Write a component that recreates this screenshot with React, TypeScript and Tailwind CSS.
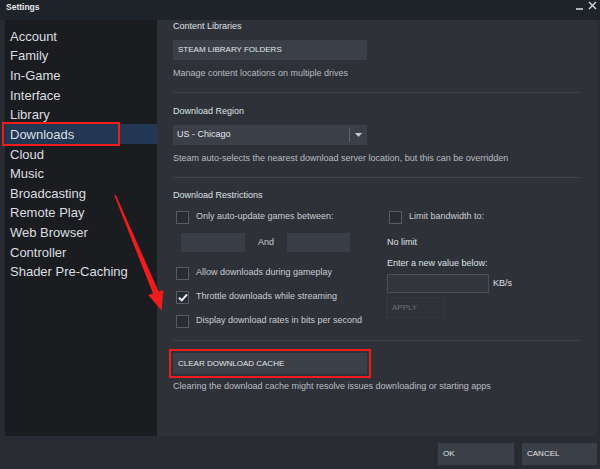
import React from 'react'

const NAV_ITEMS = [
  'Account',
  'Family',
  'In-Game',
  'Interface',
  'Library',
  'Downloads',
  'Cloud',
  'Music',
  'Broadcasting',
  'Remote Play',
  'Web Browser',
  'Controller',
  'Shader Pre-Caching',
]

function Checkbox({ checked = false }: { checked?: boolean }) {
  return (
    <div className="w-[13px] h-[13px] border border-[#585c63] bg-[#292c32] flex items-center justify-center shrink-0">
      {checked && (
        <svg width="10" height="9" viewBox="0 0 10 9">
          <path d="M1 4.8 L3.8 7.4 L9 1.4" stroke="#eef0f1" strokeWidth="2" fill="none" />
        </svg>
      )}
    </div>
  )
}

function CheckRow({ label, checked = false }: { label: string; checked?: boolean }) {
  return (
    <div className="flex items-center h-[14px]">
      <div className="ml-[3px]">
        <Checkbox checked={checked} />
      </div>
      <span className="ml-[7px] text-[9px] text-[#c9cdd1] whitespace-nowrap">{label}</span>
    </div>
  )
}

function Divider({ className = '' }: { className?: string }) {
  return <div className={'h-[1px] bg-[#3d4047] ' + className} />
}

export default function App() {
  return (
    <div
      className="relative w-[600px] h-[469px] flex flex-col bg-[#282b31] overflow-hidden"
      style={{ fontFamily: '"Liberation Sans", Arial, sans-serif' }}
    >
      {/* Title bar */}
      <div className="h-[20px] flex items-start justify-between bg-[#1e2229] shrink-0">
        <span className="pl-[6px] pt-[2px] text-[8.5px] leading-[10px] font-bold text-[#e4e6e8]">Settings</span>
        <div className="flex items-start gap-[5px] pr-[3px] pt-[1px]">
          <div className="w-[7px] h-[2px] bg-[#aeb2b6] mt-[7px]" />
          <svg width="9" height="9" viewBox="0 0 9 9">
            <path d="M1 1 L8 8 M8 1 L1 8" stroke="#d8dadc" strokeWidth="1.4" />
          </svg>
        </div>
      </div>

      {/* Body */}
      <div className="flex h-[416px] pl-[5px] pr-[3px]">
        {/* Sidebar */}
        <div className="w-[152px] bg-[#1a1c20] pt-[6px]">
          {NAV_ITEMS.map((item) => (
            <div
              key={item}
              className={
                'h-[19.67px] flex items-center pl-[5px] pt-[1px] text-[13px] text-[#dcdfe1] ' +
                (item === 'Downloads' ? 'bg-[#213753]' : '')
              }
            >
              {item}
            </div>
          ))}
        </div>

        {/* Content */}
        <div className="flex-1 bg-[#2e3138] pl-[16px] pr-[17px] flex flex-col">
          <div className="h-[13px] leading-[13px] text-[9px] text-[#dfe1e3]">Content Libraries</div>
          <div className="mt-[7px] w-[194px] h-[20px] bg-[#3b3f48] flex items-center pl-[5px] text-[8px] text-[#e4e6e8]">
            STEAM LIBRARY FOLDERS
          </div>
          <div className="mt-[6px] h-[14px] leading-[14px] text-[9px] text-[#b9bdc1]">
            Manage content locations on multiple drives
          </div>
          <Divider className="mt-[12px]" />

          <div className="mt-[11px] h-[14px] leading-[14px] text-[9px] text-[#dfe1e3]">Download Region</div>
          <div className="mt-[7px] w-[194px] h-[20px] bg-[#3b3f48] flex items-center">
            <span className="pl-[4px] flex-1 text-[9px] text-[#e4e6e8]">US - Chicago</span>
            <div className="w-[1px] h-[14px] bg-[#5d626a]" />
            <svg className="mx-[5px]" width="7" height="4" viewBox="0 0 7 4">
              <path d="M0 0 L7 0 L3.5 4 Z" fill="#c4c8cc" />
            </svg>
          </div>
          <div className="mt-[6px] h-[14px] leading-[14px] text-[9px] text-[#b9bdc1] whitespace-nowrap">
            Steam auto-selects the nearest download server location, but this can be overridden
          </div>
          <Divider className="mt-[12px]" />

          <div className="mt-[10px] h-[14px] leading-[14px] text-[9px] text-[#dfe1e3]">Download Restrictions</div>

          <div className="flex">
            {/* Left column */}
            <div className="w-[213px] flex flex-col">
              <div className="mt-[8px]">
                <CheckRow label="Only auto-update games between:" />
              </div>
              <div className="mt-[9px] flex items-center h-[19px]">
                <div className="ml-[8px] w-[64px] h-[19px] bg-[#3a3e46]" />
                <span className="flex-1 text-center text-[9px] text-[#c9cdd1]">And</span>
                <div className="w-[63px] h-[19px] bg-[#3a3e46] mr-[36px]" />
              </div>
              <div className="mt-[14px]">
                <CheckRow label="Allow downloads during gameplay" />
              </div>
              <div className="mt-[10px]">
                <CheckRow label="Throttle downloads while streaming" checked />
              </div>
              <div className="mt-[10px]">
                <CheckRow label="Display download rates in bits per second" />
              </div>
            </div>

            {/* Right column */}
            <div className="flex flex-col">
              <div className="mt-[8px]">
                <CheckRow label="Limit bandwidth to:" />
              </div>
              <div className="mt-[11px] ml-[1px] h-[14px] leading-[14px] text-[9px] text-[#dfe1e3]">No limit</div>
              <div className="mt-[7px] ml-[1px] h-[14px] leading-[14px] text-[9px] text-[#dfe1e3]">
                Enter a new value below:
              </div>
              <div className="mt-[4px] ml-[1px] flex items-center">
                <div className="w-[102px] h-[19px] bg-[#33363d] border border-[#4b4f57]" />
                <span className="ml-[4px] text-[9px] text-[#dfe1e3]">KB/s</span>
              </div>
              <div className="mt-[4px] w-[59px] h-[21px] bg-[#2f3238] border border-[#35383e] flex items-center pl-[5px] text-[8px] text-[#6c7178]">
                APPLY
              </div>
            </div>
          </div>

          <Divider className="mt-[12px]" />

          <div className="relative mt-[12px] w-[194px] h-[21px] bg-[#3b3f48] flex items-center pl-[5px] text-[8px] text-[#e4e6e8]">
            CLEAR DOWNLOAD CACHE
            <div className="absolute -left-[4px] -right-[4px] -top-[4px] -bottom-[4px] border-2 border-[#f01c1c]" />
          </div>
          <div className="mt-[5px] h-[14px] leading-[14px] text-[9px] text-[#b9bdc1] whitespace-nowrap">
            Clearing the download cache might resolve issues downloading or starting apps
          </div>
        </div>
      </div>

      {/* Footer */}
      <div className="flex-1 flex justify-end items-start gap-[8px] pt-[7px] pr-[3px]">
        <div className="w-[76px] h-[22px] bg-[#3b3f48] flex items-center pl-[5px] text-[8px] text-[#e4e6e8]">OK</div>
        <div className="w-[75px] h-[22px] bg-[#3b3f48] flex items-center pl-[5px] text-[8px] text-[#e4e6e8]">CANCEL</div>
      </div>

      {/* Annotation: red box around Downloads */}
      <div className="absolute left-[2px] top-[122px] w-[118px] h-[24px] border-2 border-[#f01c1c]" />

      {/* Annotation: red arrow */}
      <svg className="absolute left-0 top-0 pointer-events-none" width="600" height="469" viewBox="0 0 600 469">
        <polygon
          points="114.3,195.3 115.7,194.7 158.6,291.4 163.3,290 161.7,310.7 148.3,295 153,293.6"
          fill="#f01c1c"
        />
      </svg>
    </div>
  )
}
